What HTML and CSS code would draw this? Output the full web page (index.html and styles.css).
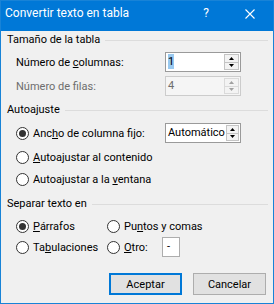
FILE: index.html
```html
<!DOCTYPE html>
<html lang="es">
<head>
    <meta charset="UTF-8">
    <title>Convertir texto en tabla</title>
    <link rel="stylesheet" href="styles.css">
</head>
<body>
    <div class="dialog">
        <!-- Title bar -->
        <div class="titlebar">
            <span class="title">Convertir texto en tabla</span>
            <span class="help">?</span>
            <svg class="close" width="10" height="10" viewBox="0 0 10 10">
                <path d="M0.5 0.5 L9.5 9.5 M9.5 0.5 L0.5 9.5" stroke="#fff" stroke-width="1.1" fill="none"/>
            </svg>
        </div>

        <div class="content">
            <!-- Tamaño de la tabla -->
            <div class="group-title">Tamaño de la tabla</div>
            <div class="field">
                <span class="label">Número de <u>c</u>olumnas:</span>
                <div class="spin">
                    <span class="value"><span class="selected">1</span></span>
                    <div class="arrows">
                        <span><svg width="5" height="3" viewBox="0 0 5 3"><polygon points="0,3 2.5,0 5,3"/></svg></span>
                        <span><svg width="5" height="3" viewBox="0 0 5 3"><polygon points="0,0 5,0 2.5,3"/></svg></span>
                    </div>
                </div>
            </div>
            <div class="field disabled">
                <span class="label">Número de filas:</span>
                <div class="spin">
                    <span class="value">4</span>
                    <div class="arrows">
                        <span><svg width="5" height="3" viewBox="0 0 5 3"><polygon points="0,3 2.5,0 5,3"/></svg></span>
                        <span><svg width="5" height="3" viewBox="0 0 5 3"><polygon points="0,0 5,0 2.5,3"/></svg></span>
                    </div>
                </div>
            </div>

            <!-- Autoajuste -->
            <div class="group-title second">Autoajuste</div>
            <div class="field option-first">
                <span class="label"><span class="radio checked"></span><span>Anc<u>h</u>o de columna fijo:</span></span>
                <div class="spin">
                    <span class="value">Automático</span>
                    <div class="arrows">
                        <span><svg width="5" height="3" viewBox="0 0 5 3"><polygon points="0,3 2.5,0 5,3"/></svg></span>
                        <span><svg width="5" height="3" viewBox="0 0 5 3"><polygon points="0,0 5,0 2.5,3"/></svg></span>
                    </div>
                </div>
            </div>
            <div class="option opt2"><span class="radio"></span><span><u>A</u>utoajustar al contenido</span></div>
            <div class="option opt3"><span class="radio"></span><span>Autoajustar a la <u>v</u>entana</span></div>

            <!-- Separar texto en -->
            <div class="group-title third">Separar texto en</div>
            <div class="cols">
                <div class="option"><span class="radio checked"></span><span><u>P</u>árrafos</span></div>
                <div class="option"><span class="radio"></span><span>Pu<u>n</u>tos y comas</span></div>
                <div class="option"><span class="radio"></span><span>Ta<u>b</u>ulaciones</span></div>
                <div class="option"><span class="radio"></span><span class="other-label"><u>O</u>tro:</span><span class="other-box">-</span></div>
            </div>

            <!-- Buttons -->
            <div class="buttons">
                <button class="btn default">Aceptar</button>
                <button class="btn">Cancelar</button>
            </div>
        </div>
    </div>
</body>
</html>
```

FILE: styles.css
```css
/* General */
body {
    margin: 0;
    font-family: Roboto, "Liberation Sans", sans-serif;
    font-size: 11px;
    color: #000;
    background: #f0f0f0;
}

.dialog {
    width: 274px;
    height: 304px;
    box-sizing: border-box;
    border: 1px solid #1883d7;
    background: #f0f0f0;
}

/* Title bar */
.titlebar {
    height: 30px;
    box-sizing: border-box;
    padding: 4px 0 0 4px;
    background: #0078d7;
    color: #fff;
    display: flex;
    align-items: flex-start;
    font-size: 12px;
    line-height: 16px;
}

.title {
    flex: 1;
}

.help {
    margin-right: 36px;
}

.close {
    margin: 4px 18px 0 0;
}

/* Content */
.content {
    padding: 0 5px 0 6px;
}

.group-title {
    display: flex;
    align-items: center;
    height: 16px;
    line-height: 16px;
    margin-top: 1px;
    white-space: nowrap;
}

.group-title::after {
    content: "";
    flex: 1;
    border-top: 1px solid #dcdcdc;
    margin-left: 5px;
}

.group-title.second {
    margin-top: 6px;
}

.group-title.third {
    margin-top: 7px;
}

/* Label + spin box rows */
.field {
    display: flex;
    align-items: center;
    height: 20px;
    padding-left: 9px;
    margin-top: 4px;
}

.field.option-first {
    margin-top: 5px;
}

.label {
    width: 149px;
    display: flex;
    align-items: center;
    white-space: pre;
}

.spin {
    width: 76px;
    height: 20px;
    box-sizing: border-box;
    border: 1px solid #9a9a9a;
    background: #fff;
    display: flex;
}

.spin .value {
    flex: 1;
    padding-left: 2px;
    line-height: 18px;
}

.selected {
    background: #99c9ef;
    padding: 1px 0;
}

.arrows {
    width: 15px;
    margin: 1px;
    box-sizing: border-box;
    border: 1px solid #c4c4c4;
    display: flex;
    flex-direction: column;
}

.arrows span {
    flex: 1;
    display: flex;
    align-items: center;
    justify-content: center;
    background: #f3f3f3;
}

.arrows span + span {
    border-top: 1px solid #c4c4c4;
}

.arrows svg {
    fill: #000;
}

.disabled {
    color: #6d6d6d;
}

.disabled .spin {
    border-color: #cccccc;
    background: #f5f5f5;
}

.disabled .arrows {
    border-color: #dadada;
}

.disabled .arrows span + span {
    border-top-color: #dadada;
}

.disabled .arrows svg {
    fill: #a0a0a0;
}

/* Radio options */
.option {
    display: flex;
    align-items: center;
    height: 20px;
    padding-left: 9px;
    white-space: pre;
}

.opt2 {
    margin-top: 4px;
}

.opt3 {
    margin-top: 2px;
}

.radio {
    width: 13px;
    height: 13px;
    box-sizing: border-box;
    border: 1px solid #333;
    border-radius: 50%;
    background: #fff;
    margin-right: 4px;
    display: flex;
    align-items: center;
    justify-content: center;
    flex-shrink: 0;
}

.radio.checked::before {
    content: "";
    width: 7px;
    height: 7px;
    border-radius: 50%;
    background: #333;
}

.cols {
    display: grid;
    grid-template-columns: 100px auto;
    row-gap: 1px;
    margin-top: 4px;
}

.cols .option:nth-child(even) {
    padding-left: 0;
}

.other-label {
    width: 38px;
}

.other-box {
    width: 18px;
    height: 20px;
    box-sizing: border-box;
    border: 1px solid #adadad;
    background: #fff;
    padding-left: 4px;
    line-height: 18px;
}

/* Buttons */
.buttons {
    display: flex;
    justify-content: flex-end;
    gap: 11px;
    margin: 16px 2px 0 0;
}

.btn {
    width: 73px;
    height: 22px;
    box-sizing: border-box;
    border: 1px solid #adadad;
    background: #e1e1e1;
    font-family: inherit;
    font-size: 11px;
    color: #000;
    padding: 0;
}

.btn.default {
    border: 2px solid #0078d7;
}
```
